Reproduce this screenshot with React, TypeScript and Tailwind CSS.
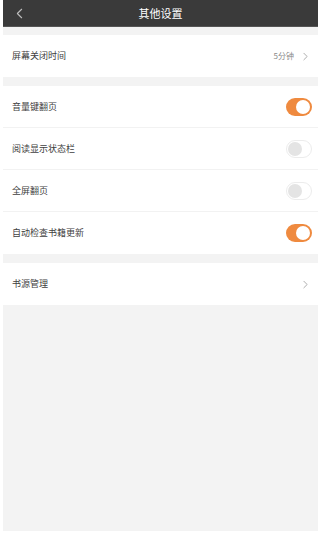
import { ChevronLeft, ChevronRight } from 'lucide-react';

type Row =
  | { kind: 'link'; label: string; value?: string }
  | { kind: 'toggle'; label: string; on: boolean };

const GROUPS: Row[][] = [
  [{ kind: 'link', label: '屏幕关闭时间', value: '5分钟' }],
  [
    { kind: 'toggle', label: '音量键翻页', on: true },
    { kind: 'toggle', label: '阅读显示状态栏', on: false },
    { kind: 'toggle', label: '全屏翻页', on: false },
    { kind: 'toggle', label: '自动检查书籍更新', on: true },
  ],
  [{ kind: 'link', label: '书源管理' }],
];

function Toggle({ on }: { on: boolean }) {
  if (on) {
    return (
      <div className="flex h-[18px] w-[26px] items-center justify-end rounded-full bg-[#ef8a3f] pr-[2px]">
        <div className="h-[14px] w-[14px] rounded-full bg-white" />
      </div>
    );
  }
  return (
    <div className="flex h-[18px] w-[26px] items-center rounded-full border border-[#ececec] bg-white pl-[1px]">
      <div className="h-[14px] w-[14px] rounded-full bg-[#e4e4e4]" />
    </div>
  );
}

export default function App() {
  return (
    <div
      className="flex h-[533px] w-[320px] flex-col bg-white pb-[2px] pl-[3px] pr-[2px]"
      style={{ fontFamily: '"Noto Sans CJK SC", "Noto Sans", sans-serif' }}
    >
      <div className="relative flex h-[27px] shrink-0 items-center justify-center border-b border-[#555] bg-[#3a3a3a]">
        <ChevronLeft className="absolute left-[8px] h-[17px] w-[17px] text-[#bdbdbd]" strokeWidth={1.5} />
        <span className="text-[11px] text-white">其他设置</span>
      </div>
      <div className="flex flex-1 flex-col bg-[#f3f3f3] pt-[8px]">
        {GROUPS.map((group, gi) => (
          <div key={gi} className="mb-[9px] flex flex-col bg-white">
            {group.map((r, i) => (
              <div
                key={r.label}
                className={`flex h-[42px] items-center justify-between pl-[9px] pr-[6px] ${
                  i < group.length - 1 ? 'border-b border-[#f2f2f2]' : ''
                }`}
              >
                <span className="text-[9px] text-[#404040]">{r.label}</span>
                {r.kind === 'toggle' ? (
                  <Toggle on={r.on} />
                ) : (
                  <div className="flex items-center gap-[5px]">
                    {r.value ? <span className="text-[8px] text-[#8a8a8a]">{r.value}</span> : null}
                    <ChevronRight className="h-[13px] w-[13px] text-[#9a9a9a]" strokeWidth={1.5} />
                  </div>
                )}
              </div>
            ))}
          </div>
        ))}
      </div>
    </div>
  );
}
